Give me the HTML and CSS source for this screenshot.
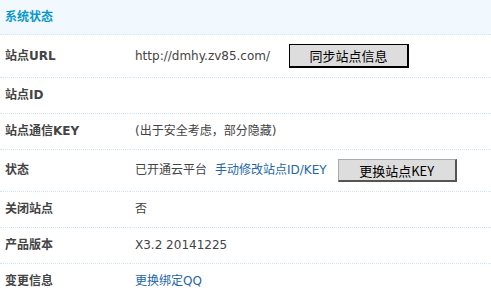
FILE: index.html
```
<!DOCTYPE html>
<html lang="zh-CN">
<head>
    <meta charset="UTF-8">
    <meta name="viewport" content="width=device-width, initial-scale=1.0">
    <title>系统状态</title>

    <link rel="stylesheet" href="styles.css">
</head>
<body>
    <table class="tb">
        <tr>
            <th class="partition" colspan="2">系统状态</th>
        </tr>
        <tr>
            <td class="label">站点URL</td>
            <td class="value">http://dmhy.zv85.com/<button class="btn">同步站点信息</button></td>
        </tr>
        <tr>
            <td class="label">站点ID</td>
            <td class="value"></td>
        </tr>
        <tr>
            <td class="label">站点通信KEY</td>
            <td class="value">(出于安全考虑，部分隐藏)</td>
        </tr>
        <tr>
            <td class="label">状态</td>
            <td class="value">已开通云平台<a class="ml" href="#">手动修改站点ID/KEY</a><button class="btn btn-soft">更换站点KEY</button></td>
        </tr>
        <tr>
            <td class="label">关闭站点</td>
            <td class="value">否</td>
        </tr>
        <tr>
            <td class="label">产品版本</td>
            <td class="value">X3.2 20141225</td>
        </tr>
        <tr>
            <td class="label">变更信息</td>
            <td class="value"><a href="#">更换绑定QQ</a></td>
        </tr>
    </table>
</body>
</html>
```

FILE: styles.css
```
body {
    margin: 0;
    background-color: #fff;
    font-family: "DejaVu Sans", "Noto Sans CJK SC", sans-serif;
    font-size: 12px;
    color: #444;
}
.tb {
    width: 100%;
    border-collapse: collapse;
}
.tb th,
.tb td {
    text-align: left;
    border-bottom: 1px dotted #cfe6f7;
    vertical-align: middle;
}
.tb .partition {
    height: 34px;
    padding: 0 5px;
    background-color: #f1f8fe;
    color: #0899cc;
    font-size: 12px;
    font-weight: bold;
    line-height: 18px;
}
.tb td {
    padding: 9px 5px;
    line-height: 17px;
}
.tb .label {
    width: 120px;
    font-weight: bold;
    color: #444;
}
.tb .value {
    padding-left: 5px;
}
a {
    color: #2366a8;
    text-decoration: none;
}
.ml {
    margin-left: 8px;
}
.btn {
    box-sizing: border-box;
    width: 120px;
    height: 24px;
    margin-left: 19px;
    padding: 0;
    border: 1px solid #000;
    border-right-width: 2px;
    border-bottom-width: 2px;
    background-color: #ddd;
    font-family: "Noto Sans CJK SC", "DejaVu Sans", sans-serif;
    font-size: 13px;
    color: #000;
    vertical-align: middle;
}
.btn-soft {
    width: 119px;
    height: 23px;
    margin-left: 11px;
    border-color: #aaa;
    border-right-color: #555;
    border-bottom-color: #555;
}
```
